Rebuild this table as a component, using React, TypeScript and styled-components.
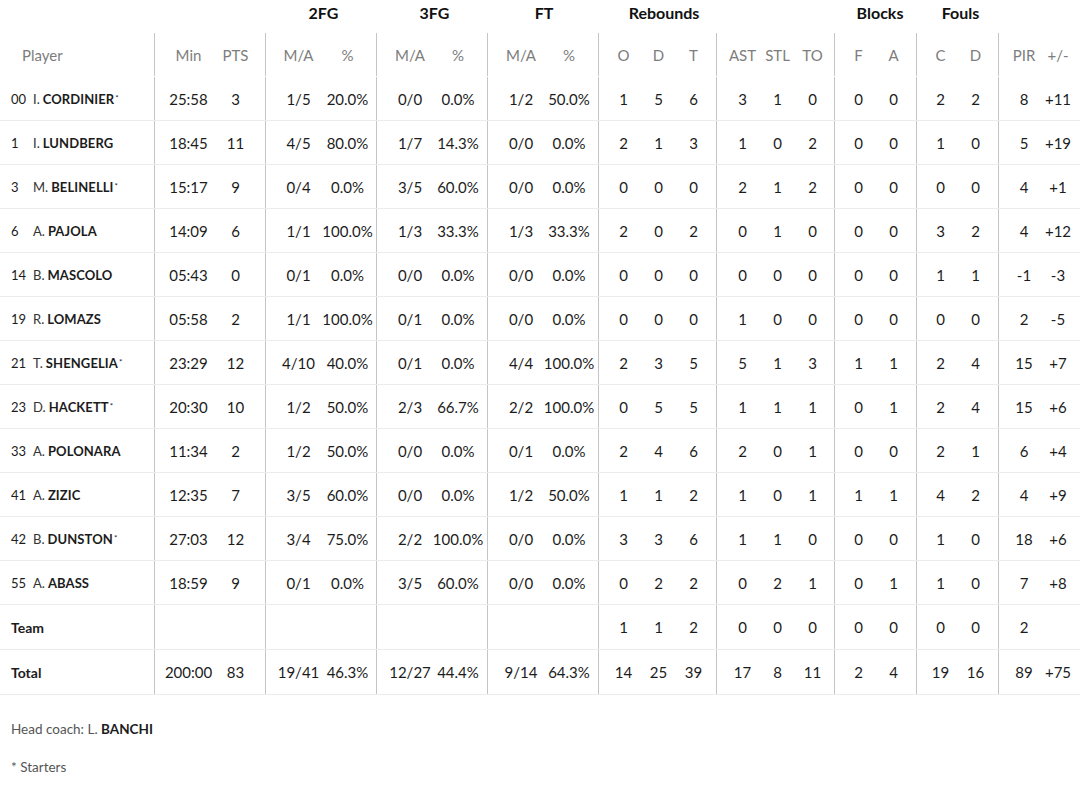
import React from "react";
import styled, { createGlobalStyle } from "styled-components";

const Global = createGlobalStyle`
  html, body { margin: 0; padding: 0; background: #fff; }
  body { font-family: Lato, "Open Sans", Arial, sans-serif; color: #1c1c1c; }
  * { box-sizing: border-box; }
`;

type G = { w: number; p: number; cw: number; n: number; label?: string; off?: number };

const GROUPS: G[] = [
  { w: 111, p: 10, cw: 47, n: 2 },
  { w: 111, p: 8, cw: 49, n: 2, label: "2FG", off: 6 },
  { w: 111, p: 9, cw: 48, n: 2, label: "3FG", off: 6 },
  { w: 111, p: 9, cw: 48, n: 2, label: "FT", off: 3 },
  { w: 118, p: 7, cw: 35, n: 3, label: "Rebounds", off: 14 },
  { w: 118, p: 8, cw: 35, n: 3 },
  { w: 82, p: 6, cw: 35, n: 2, label: "Blocks", off: 10 },
  { w: 82, p: 6, cw: 35, n: 2, label: "Fouls", off: 7 },
  { w: 82, p: 8, cw: 34, n: 2 },
];

const SUB = [
  ["Min", "PTS"],
  ["M/A", "%"],
  ["M/A", "%"],
  ["M/A", "%"],
  ["O", "D", "T"],
  ["AST", "STL", "TO"],
  ["F", "A"],
  ["C", "D"],
  ["PIR", "+/-"],
];

type P = { no: string; init: string; name: string; st?: boolean; v: string };

const PLAYERS: P[] = [
  { no: "00", init: "I.", name: "CORDINIER", st: true, v: "25:58 3 1/5 20.0% 0/0 0.0% 1/2 50.0% 1 5 6 3 1 0 0 0 2 2 8 +11" },
  { no: "1", init: "I.", name: "LUNDBERG", v: "18:45 11 4/5 80.0% 1/7 14.3% 0/0 0.0% 2 1 3 1 0 2 0 0 1 0 5 +19" },
  { no: "3", init: "M.", name: "BELINELLI", st: true, v: "15:17 9 0/4 0.0% 3/5 60.0% 0/0 0.0% 0 0 0 2 1 2 0 0 0 0 4 +1" },
  { no: "6", init: "A.", name: "PAJOLA", v: "14:09 6 1/1 100.0% 1/3 33.3% 1/3 33.3% 2 0 2 0 1 0 0 0 3 2 4 +12" },
  { no: "14", init: "B.", name: "MASCOLO", v: "05:43 0 0/1 0.0% 0/0 0.0% 0/0 0.0% 0 0 0 0 0 0 0 0 1 1 -1 -3" },
  { no: "19", init: "R.", name: "LOMAZS", v: "05:58 2 1/1 100.0% 0/1 0.0% 0/0 0.0% 0 0 0 1 0 0 0 0 0 0 2 -5" },
  { no: "21", init: "T.", name: "SHENGELIA", st: true, v: "23:29 12 4/10 40.0% 0/1 0.0% 4/4 100.0% 2 3 5 5 1 3 1 1 2 4 15 +7" },
  { no: "23", init: "D.", name: "HACKETT", st: true, v: "20:30 10 1/2 50.0% 2/3 66.7% 2/2 100.0% 0 5 5 1 1 1 0 1 2 4 15 +6" },
  { no: "33", init: "A.", name: "POLONARA", v: "11:34 2 1/2 50.0% 0/0 0.0% 0/1 0.0% 2 4 6 2 0 1 0 0 2 1 6 +4" },
  { no: "41", init: "A.", name: "ZIZIC", v: "12:35 7 3/5 60.0% 0/0 0.0% 1/2 50.0% 1 1 2 1 0 1 1 1 4 2 4 +9" },
  { no: "42", init: "B.", name: "DUNSTON", st: true, v: "27:03 12 3/4 75.0% 2/2 100.0% 0/0 0.0% 3 3 6 1 1 0 0 0 1 0 18 +6" },
  { no: "55", init: "A.", name: "ABASS", v: "18:59 9 0/1 0.0% 3/5 60.0% 0/0 0.0% 0 2 2 0 2 1 0 1 1 0 7 +8" },
];

const TEAM = "_ _ _ _ _ _ _ _ 1 1 2 0 0 0 0 0 0 0 2 _".split(" ").map((s) => (s === "_" ? "" : s));
const TOTAL = "200:00 83 19/41 46.3% 12/27 44.4% 9/14 64.3% 14 25 39 17 8 11 2 4 19 16 89 +75".split(" ");

const Table = styled.div`
  width: 1080px;
`;

const GroupHeadRow = styled.div`
  display: flex;
  height: 33px;
  align-items: flex-start;
`;

const GroupLabel = styled.div<{ $w: number; $off: number }>`
  width: ${(p) => p.$w}px;
  flex: none;
  padding-left: ${(p) => p.$off}px;
  padding-top: 4px;
  text-align: center;
  font-weight: 700;
  font-size: 16px;
  line-height: 18px;
  color: #111;
  white-space: nowrap;
`;

const Row = styled.div<{ $line?: boolean; $h?: number }>`
  display: flex;
  height: ${(p) => p.$h ?? 44}px;
  border-bottom: 1px solid ${(p) => (p.$line ? "#ececec" : "transparent")};
`;

const PlayerCell = styled.div<{ $head?: boolean }>`
  width: 154px;
  flex: none;
  display: flex;
  align-items: center;
  padding-left: ${(p) => (p.$head ? 22 : 11)}px;
  font-size: ${(p) => (p.$head ? 15 : 13)}px;
  color: ${(p) => (p.$head ? "#7d7d7d" : "#1c1c1c")};
  white-space: nowrap;
`;

const Num = styled.span`
  width: 22px;
  flex: none;
`;

const Init = styled.span`
  margin-right: 3px;
  color: #333;
`;

const Surname = styled.span`
  font-weight: 700;
  letter-spacing: 0.1px;
`;

const Star = styled.sup`
  font-size: 8px;
  margin-left: 1px;
  position: relative;
  top: -1px;
`;

const Strong = styled.span`
  font-weight: 700;
  font-size: 14px;
`;

const Group = styled.div<{ $w: number; $p: number }>`
  width: ${(p) => p.$w}px;
  flex: none;
  display: flex;
  align-items: center;
  border-left: 1px solid #c4c4c4;
  padding-left: ${(p) => p.$p}px;
`;

const Cell = styled.div<{ $w: number; $head?: boolean }>`
  width: ${(p) => p.$w}px;
  flex: none;
  display: flex;
  justify-content: center;
  white-space: nowrap;
  font-size: 15px;
  color: ${(p) => (p.$head ? "#7d7d7d" : "#1c1c1c")};
`;

const Footer = styled.div`
  padding: 25px 11px 0;
  font-size: 13.5px;
  color: #555;
`;

const FootLine = styled.div`
  height: 18px;
  line-height: 18px;
  margin-bottom: 20px;
`;

const FootBold = styled.span`
  font-weight: 700;
  color: #1c1c1c;
`;

function Groups({ vals, head }: { vals: string[]; head?: boolean }) {
  let i = 0;
  return (
    <>
      {GROUPS.map((g, gi) => (
        <Group key={gi} $w={g.w} $p={g.p}>
          {Array.from({ length: g.n }).map((_, ci) => {
            const v = vals[i++];
            return (
              <Cell key={ci} $w={g.cw} $head={head}>
                {v}
              </Cell>
            );
          })}
        </Group>
      ))}
    </>
  );
}

export default function App() {
  return (
    <>
      <Global />
      <Table>
        <GroupHeadRow>
          <GroupLabel $w={154} $off={0} />
          {GROUPS.map((g, i) => (
            <GroupLabel key={i} $w={g.w} $off={g.off ?? 0}>
              {g.label}
            </GroupLabel>
          ))}
        </GroupHeadRow>
        <Row>
          <PlayerCell $head>Player</PlayerCell>
          <Groups vals={SUB.flat()} head />
        </Row>
        {PLAYERS.map((p) => (
          <Row key={p.no} $line>
            <PlayerCell>
              <Num>{p.no}</Num>
              <Init>{p.init}</Init>
              <Surname>{p.name}</Surname>
              {p.st && <Star>*</Star>}
            </PlayerCell>
            <Groups vals={p.v.split(" ")} />
          </Row>
        ))}
        <Row $line $h={45}>
          <PlayerCell>
            <Strong>Team</Strong>
          </PlayerCell>
          <Groups vals={TEAM} />
        </Row>
        <Row $line $h={45}>
          <PlayerCell>
            <Strong>Total</Strong>
          </PlayerCell>
          <Groups vals={TOTAL} />
        </Row>
      </Table>
      <Footer>
        <FootLine>
          Head coach: L. <FootBold>BANCHI</FootBold>
        </FootLine>
        <FootLine>* Starters</FootLine>
      </Footer>
    </>
  );
}
